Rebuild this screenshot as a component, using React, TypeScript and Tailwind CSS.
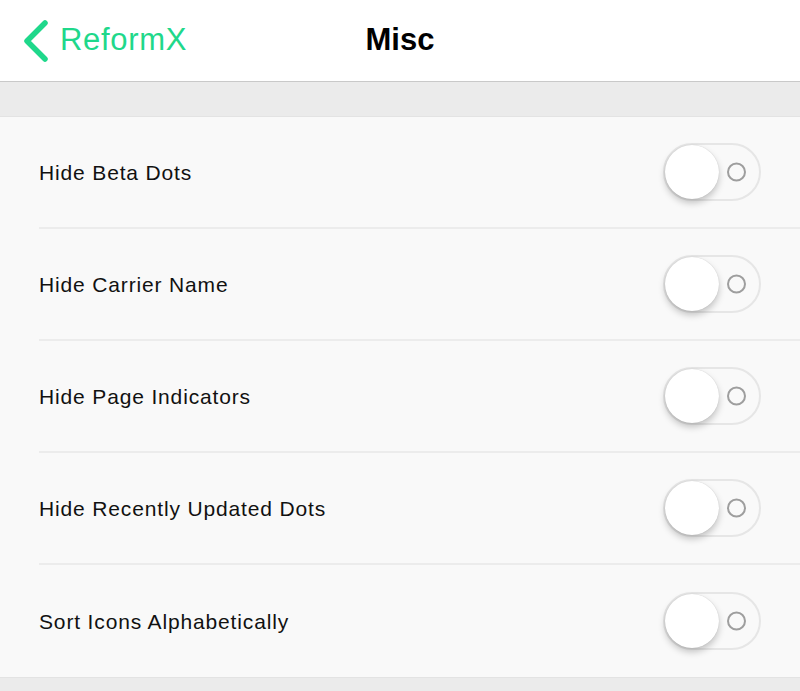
import React, { useState } from "react";

const settings = [
  "Hide Beta Dots",
  "Hide Carrier Name",
  "Hide Page Indicators",
  "Hide Recently Updated Dots",
  "Sort Icons Alphabetically",
];

// iOS-style switch with the accessibility on/off label
const Toggle: React.FC<{ on: boolean; onChange: () => void }> = ({ on, onChange }) => (
  <button
    onClick={onChange}
    className={`relative h-[58px] w-[98px] shrink-0 rounded-full border-2 ${
      on ? "border-[#1ed88a] bg-[#1ed88a]" : "border-[#e6e6e6] bg-[#f9f9f9]"
    }`}
  >
    {!on && (
      <span className="absolute right-[13px] top-1/2 h-[19px] w-[19px] -translate-y-1/2 rounded-full border-2 border-[#9e9e9e]" />
    )}
    <span
      className={`absolute top-[0px] h-[54px] w-[54px] rounded-full bg-white shadow-[0_4px_7px_rgba(0,0,0,0.22),0_0_1px_rgba(0,0,0,0.2)] ${
        on ? "left-[40px]" : "left-[0px]"
      }`}
    />
  </button>
);

export default function App() {
  const [values, setValues] = useState<boolean[]>(settings.map(() => false));

  return (
    <div className="flex h-[691px] w-[800px] flex-col overflow-hidden bg-[#ebebeb] font-['Liberation_Sans',Arial,sans-serif]">
      {/* Nav bar */}
      <div className="relative flex h-[82px] shrink-0 items-center border-b border-[#c9c9c9] bg-white">
        <div className="flex items-center pl-[22px] text-[#1fd88b]">
          <svg width="28" height="42" viewBox="0 0 28 42" className="mt-[1px]">
            <path d="M23 3 L5 21 L23 39" fill="none" stroke="currentColor" strokeWidth="5.5" strokeLinecap="round" strokeLinejoin="round" />
          </svg>
          <span className="ml-[10px] text-[31px] tracking-[0.7px]">ReformX</span>
        </div>
        <div className="absolute left-0 right-0 text-center text-[31px] font-bold text-black">Misc</div>
      </div>

      <div className="h-[35px] shrink-0 border-b border-[#e3e3e3]" />

      <div className="bg-[#f9f9f9]">
        {settings.map((label, i) => (
          <div key={label} className="pl-[39px]">
            <div
              className={`flex h-[112px] items-center justify-between pr-[39px] ${
                i < settings.length - 1 ? "border-b-2 border-[#ececec]" : ""
              }`}
            >
              <span className="pt-[2px] text-[21px] tracking-[0.85px] text-[#111]">{label}</span>
              <Toggle
                on={values[i]}
                onChange={() => setValues((v) => v.map((x, j) => (j === i ? !x : x)))}
              />
            </div>
          </div>
        ))}
      </div>
      <div className="border-t border-[#e3e3e3]" />
    </div>
  );
}
